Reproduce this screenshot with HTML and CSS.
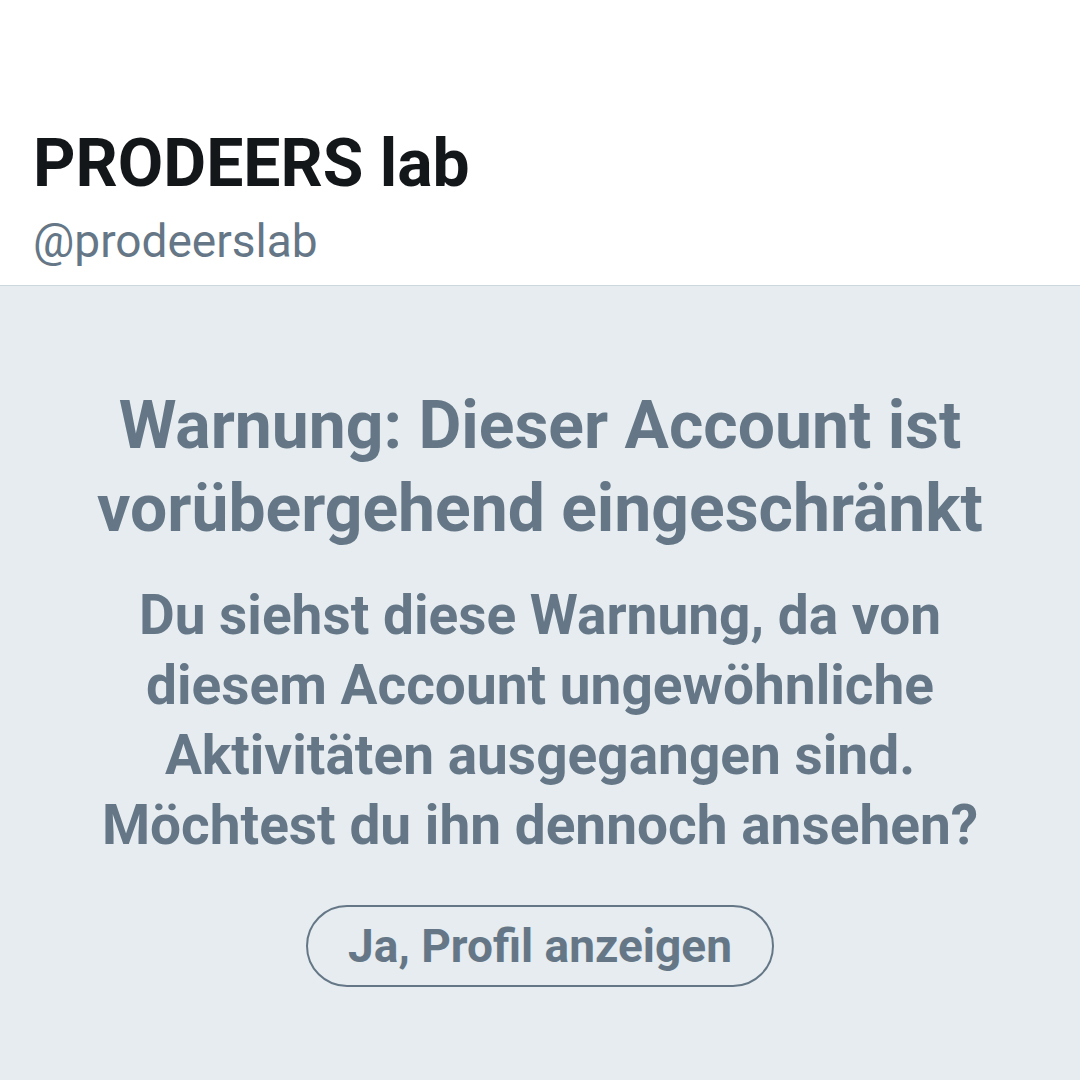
FILE: index.html
```html
<!DOCTYPE html>
<html lang="de">
<head>
<meta charset="utf-8">
<link rel="stylesheet" href="styles.css">
</head>
<body>
<header class="profile-head">
  <h1 class="name">PRODEERS lab</h1>
  <div class="handle">@prodeerslab</div>
</header>
<main class="warning">
  <h2 class="warning-title">Warnung: Dieser Account ist<br>vorübergehend eingeschränkt</h2>
  <p class="warning-text">Du siehst diese Warnung, da von<br>diesem Account ungewöhnliche<br>Aktivitäten ausgegangen sind.<br>Möchtest du ihn dennoch ansehen?</p>
  <button class="show-btn" type="button">Ja, Profil anzeigen</button>
</main>
</body>
</html>
```
FILE: styles.css
```css
html, body {
  margin: 0;
  padding: 0;
  height: 100%;
}
body {
  font-family: Roboto, "Liberation Sans", sans-serif;
  background: #e6ecf0;
  display: flex;
  flex-direction: column;
}
.profile-head {
  background: #ffffff;
  padding: 124px 33px 0;
  border-bottom: 1px solid #ccd6dd;
  height: 161px;
}
.name {
  margin: 0;
  font-size: 66px;
  line-height: 80px;
  font-weight: 700;
  color: #14171a;
}
.handle {
  margin-top: 10px;
  font-size: 46px;
  line-height: 54px;
  color: #657786;
  font-weight: 400;
}
.warning {
  flex: 1;
  display: flex;
  flex-direction: column;
  align-items: center;
  text-align: center;
  padding-top: 98px;
}
.warning-title {
  margin: 0;
  font-size: 66px;
  line-height: 83px;
  font-weight: 700;
  color: #657786;
}
.warning-text {
  margin: 30px 0 0;
  font-size: 55px;
  line-height: 70px;
  font-weight: 700;
  color: #657786;
}
.show-btn {
  margin-top: 45px;
  font-family: Roboto, "Liberation Sans", sans-serif;
  font-size: 46px;
  line-height: 54px;
  font-weight: 700;
  color: #657786;
  background: transparent;
  border: 2px solid #657786;
  border-radius: 42px;
  padding: 12px 40px;
}
```
